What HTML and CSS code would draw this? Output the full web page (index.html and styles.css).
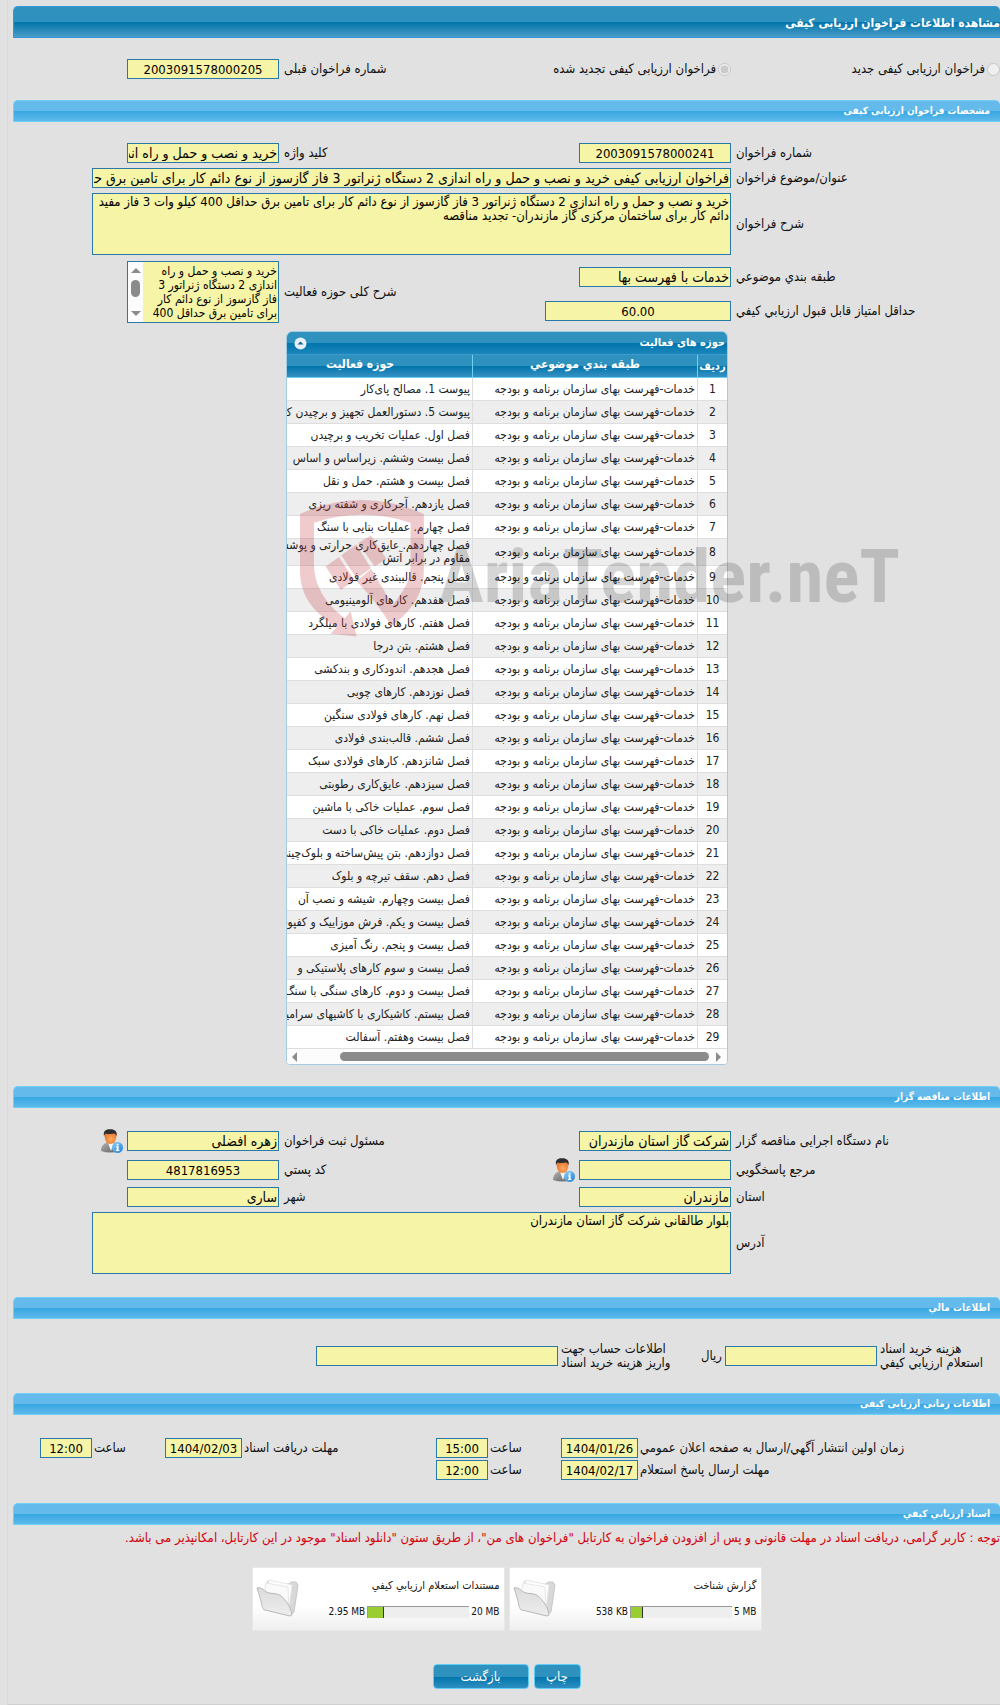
FILE: index.html
```html
<!DOCTYPE html>
<html lang="fa" dir="rtl">
<head>
	<meta charset="utf-8">
	<title>مشاهده اطلاعات فراخوان ارزیابی کیفی</title>
	<link rel="stylesheet" href="styles.css">
</head>
<body>
	<!-- shared icons -->
	<svg class="defs" aria-hidden="true">
		<defs>
			<linearGradient id="gSuit" x1="0" y1="0" x2="1" y2="1">
				<stop offset="0" stop-color="#b5b5b5"/>
				<stop offset="1" stop-color="#5c5c5c"/>
			</linearGradient>
			<radialGradient id="gFace" cx="0.55" cy="0.6" r="0.6">
				<stop offset="0" stop-color="#ffab61"/>
				<stop offset="1" stop-color="#e5742a"/>
			</radialGradient>
			<linearGradient id="gInfo" x1="0" y1="0" x2="1" y2="1">
				<stop offset="0" stop-color="#8fd0fa"/>
				<stop offset="1" stop-color="#1c7fd4"/>
			</linearGradient>
			<linearGradient id="gFolder" x1="0" y1="0" x2="0" y2="1">
				<stop offset="0" stop-color="#dcdcdc"/>
				<stop offset="1" stop-color="#ededed"/>
			</linearGradient>
		</defs>
		<symbol id="user" viewBox="0 0 22 24">
			<path d="M0 22C0 17 3 14 7 13L12 13C16 14 18 17 18 22Q9 25 0 22Z" fill="url(#gSuit)"/>
			<path d="M7 14L10 22L13 14Z" fill="#f4f4f4"/>
			<path d="M3.500 5C3.500 12 6 15 9.500 15S15.500 12 15.500 5L14 3H5Z" fill="url(#gFace)"/>
			<path d="M3 7C2 2 5 0 9 0.300C13 0 16.500 2 15.700 7C15 5.500 14 5 13 4.600C10 5.400 6 5 4.500 4.500Q3.500 5.500 3 7Z" fill="#2e2e2e"/>
			<circle cx="16.500" cy="18.500" r="5.500" fill="url(#gInfo)"/>
			<path d="M15.700 14.800H17.600V16.400H15.700ZM15 17.300H17.600V21H18.400V22H15V21H15.700V18.200H15Z" fill="#fff"/>
		</symbol>
		<symbol id="folder" viewBox="0 0 44 40">
			<path d="M9 7L12 2L27 6L33 5L35 3H40L42 6L38 33L35 36Z" fill="#d8d8d8" stroke="#c8c8c8"/>
			<path d="M9 13L13 1L36 6L33 30Z" fill="#fdfdfd" stroke="#e6e6e6"/>
			<path d="M8 15L10 4L32 8L33 30Z" fill="#fafafa" stroke="#e8e8e8"/>
			<path d="M1 9C4 8 7 10 9 12C14 16 20 13 25 17C30 21 35 28 36 36L34 37L9 31C7 31 7 29 6 27C5 21 3 15 1 9Z" fill="url(#gFolder)" stroke="#b8b8b8"/>
		</symbol>
	</svg>

	<div class="page">
		<h1 class="title">مشاهده اطلاعات فراخوان ارزیابی کیفی</h1>

		<form>
			<div class="fields first">
				<div class="choice">
					<input type="radio" id="new" name="kind" disabled>
					<label for="new">فراخوان ارزیابی کیفی جدید</label>
				</div>
				<div class="choice">
					<input type="radio" id="renew" name="kind" checked disabled>
					<label for="renew">فراخوان ارزیابی کیفی تجدید شده</label>
				</div>
				<label class="lbl" for="prev">شماره فراخوان قبلی</label>
				<input class="box num" id="prev" type="text" value="2003091578000205" readonly>
			</div>

			<h2 class="bar">مشخصات فراخوان ارزیابی کیفی</h2>
			<div class="fields spec">
				<label class="lbl" for="no">شماره فراخوان</label>
				<input class="box num" id="no" type="text" value="2003091578000241" readonly>
				<label class="lbl" for="key">کلید واژه</label>
				<input class="box" id="key" type="text" value="خرید و نصب و حمل و راه اندازی 2 دستگاه ژنراتور" readonly>

				<label class="lbl" for="subject">عنوان/موضوع فراخوان</label>
				<input class="box wide" id="subject" type="text" value="فراخوان ارزیابی کیفی خرید و نصب و حمل و راه اندازی 2 دستگاه ژنراتور 3 فاز گازسوز از نوع دائم کار برای تامین برق حداقل 400 کیلو وات 3 فاز مفید دائم کار" readonly>

				<label class="lbl" for="desc">شرح فراخوان</label>
				<textarea class="box wide" id="desc" readonly>خرید و نصب و حمل و راه اندازی 2 دستگاه ژنراتور 3 فاز گازسوز از نوع دائم کار برای تامین برق حداقل 400 کیلو وات 3 فاز مفید دائم کار برای ساختمان مرکزی گاز مازندران- تجدید مناقصه</textarea>

				<label class="lbl" for="cat">طبقه بندي موضوعي</label>
				<input class="box" id="cat" type="text" value="خدمات با فهرست بها" readonly>
				<label class="lbl tall" for="scope">شرح کلی حوزه فعالیت</label>
				<div class="box scroller tall">
					<textarea id="scope" readonly>خرید و نصب و حمل و راه
اندازی 2 دستگاه ژنراتور 3
فاز گازسوز از نوع دائم کار
برای تامین برق حداقل 400
کیلو وات 3 فاز مفید دائم</textarea>
					<div class="vscroll"><i class="up"></i><i class="thumb"></i><i class="down"></i></div>
				</div>

				<label class="lbl" for="score">حداقل امتیاز قابل قبول ارزیابي کیفي</label>
				<input class="box num score" id="score" type="text" value="60.00" readonly>
			</div>

			<div class="grid">
				<div class="grid-title">
					<span>حوزه های فعالیت</span>
					<button type="button" class="fold" aria-label="بستن"><svg viewBox="0 0 13 13"><circle cx="6.500" cy="6.500" r="6" fill="#e4f1fa"/><path d="M3.500 7.500L6.500 4.500L9.500 7.500Z" fill="#1a5f8c"/></svg></button>
				</div>
				<table>
					<thead>
						<tr>
							<th class="c1">ردیف</th>
							<th class="c2">طبقه بندي موضوعي</th>
							<th class="c3">حوزه فعالیت</th>
						</tr>
					</thead>
					<tbody>
						<tr><td>1</td><td>خدمات-فهرست بهای سازمان برنامه و بودجه</td><td>پیوست 1. مصالح پای‌کار</td></tr>
						<tr><td>2</td><td>خدمات-فهرست بهای سازمان برنامه و بودجه</td><td>پیوست 5. دستورالعمل تجهیز و برچیدن کارگاه</td></tr>
						<tr><td>3</td><td>خدمات-فهرست بهای سازمان برنامه و بودجه</td><td>فصل اول. عملیات تخریب و برچیدن</td></tr>
						<tr><td>4</td><td>خدمات-فهرست بهای سازمان برنامه و بودجه</td><td>فصل بیست وششم. زیراساس و اساس</td></tr>
						<tr><td>5</td><td>خدمات-فهرست بهای سازمان برنامه و بودجه</td><td>فصل بیست و هشتم. حمل و نقل</td></tr>
						<tr><td>6</td><td>خدمات-فهرست بهای سازمان برنامه و بودجه</td><td>فصل یازدهم. آجرکاری و شفته ریزی</td></tr>
						<tr><td>7</td><td>خدمات-فهرست بهای سازمان برنامه و بودجه</td><td>فصل چهارم. عملیات بنایی با سنگ</td></tr>
						<tr class="two"><td>8</td><td>خدمات-فهرست بهای سازمان برنامه و بودجه</td><td>فصل چهاردهم. عایق‌کاری حرارتی و پوشش‌های<br>مقاوم در برابر آتش</td></tr>
						<tr><td>9</td><td>خدمات-فهرست بهای سازمان برنامه و بودجه</td><td>فصل پنجم. قالببندی غیر فولادی</td></tr>
						<tr><td>10</td><td>خدمات-فهرست بهای سازمان برنامه و بودجه</td><td>فصل هفدهم. کارهای آلومینیومی</td></tr>
						<tr><td>11</td><td>خدمات-فهرست بهای سازمان برنامه و بودجه</td><td>فصل هفتم. کارهای فولادی با میلگرد</td></tr>
						<tr><td>12</td><td>خدمات-فهرست بهای سازمان برنامه و بودجه</td><td>فصل هشتم. بتن درجا</td></tr>
						<tr><td>13</td><td>خدمات-فهرست بهای سازمان برنامه و بودجه</td><td>فصل هجدهم. اندودکاری و بندکشی</td></tr>
						<tr><td>14</td><td>خدمات-فهرست بهای سازمان برنامه و بودجه</td><td>فصل نوزدهم. کارهای چوبی</td></tr>
						<tr><td>15</td><td>خدمات-فهرست بهای سازمان برنامه و بودجه</td><td>فصل نهم. کارهای فولادی سنگین</td></tr>
						<tr><td>16</td><td>خدمات-فهرست بهای سازمان برنامه و بودجه</td><td>فصل ششم. قالب‌بندی فولادی</td></tr>
						<tr><td>17</td><td>خدمات-فهرست بهای سازمان برنامه و بودجه</td><td>فصل شانزدهم. کارهای فولادی سبک</td></tr>
						<tr><td>18</td><td>خدمات-فهرست بهای سازمان برنامه و بودجه</td><td>فصل سیزدهم. عایق‌کاری رطوبتی</td></tr>
						<tr><td>19</td><td>خدمات-فهرست بهای سازمان برنامه و بودجه</td><td>فصل سوم. عملیات خاکی با ماشین</td></tr>
						<tr><td>20</td><td>خدمات-فهرست بهای سازمان برنامه و بودجه</td><td>فصل دوم. عملیات خاکی با دست</td></tr>
						<tr><td>21</td><td>خدمات-فهرست بهای سازمان برنامه و بودجه</td><td>فصل دوازدهم. بتن پیش‌ساخته و بلوک‌چینی</td></tr>
						<tr><td>22</td><td>خدمات-فهرست بهای سازمان برنامه و بودجه</td><td>فصل دهم. سقف تیرچه و بلوک</td></tr>
						<tr><td>23</td><td>خدمات-فهرست بهای سازمان برنامه و بودجه</td><td>فصل بیست وچهارم. شیشه و نصب آن</td></tr>
						<tr><td>24</td><td>خدمات-فهرست بهای سازمان برنامه و بودجه</td><td>فصل بیست و یکم. فرش موزاییک و کفپوش</td></tr>
						<tr><td>25</td><td>خدمات-فهرست بهای سازمان برنامه و بودجه</td><td>فصل بیست و پنجم. رنگ آمیزی</td></tr>
						<tr><td>26</td><td>خدمات-فهرست بهای سازمان برنامه و بودجه</td><td>فصل بیست و سوم کارهای پلاستیکی و</td></tr>
						<tr><td>27</td><td>خدمات-فهرست بهای سازمان برنامه و بودجه</td><td>فصل بیست و دوم. کارهای سنگی با سنگ</td></tr>
						<tr><td>28</td><td>خدمات-فهرست بهای سازمان برنامه و بودجه</td><td>فصل بیستم. کاشیکاری با کاشیهای سرامیکی</td></tr>
						<tr><td>29</td><td>خدمات-فهرست بهای سازمان برنامه و بودجه</td><td>فصل بیست وهفتم. آسفالت</td></tr>
					</tbody>
				</table>
				<div class="hscroll"><i class="next"></i><i class="track"><i class="thumb"></i></i><i class="prev"></i></div>
			</div>

			<h2 class="bar">اطلاعات مناقصه گزار</h2>
			<div class="fields owner">
				<label class="lbl" for="org">نام دستگاه اجرایی مناقصه گزار</label>
				<input class="box" id="org" type="text" value="شرکت گاز استان مازندران" readonly>
				<label class="lbl" for="agent">مسئول ثبت فراخوان</label>
				<div class="with-icon">
					<input class="box" id="agent" type="text" value="زهره افضلی" readonly>
					<svg class="user"><use href="#user"/></svg>
				</div>

				<label class="lbl" for="ref">مرجع پاسخگويي</label>
				<div class="with-icon">
					<input class="box" id="ref" type="text" readonly>
					<svg class="user"><use href="#user"/></svg>
				</div>
				<label class="lbl" for="zip">کد پستي</label>
				<input class="box num" id="zip" type="text" value="4817816953" readonly>

				<label class="lbl" for="state">استان</label>
				<input class="box" id="state" type="text" value="مازندران" readonly>
				<label class="lbl" for="city">شهر</label>
				<input class="box" id="city" type="text" value="ساری" readonly>

				<label class="lbl" for="addr">آدرس</label>
				<textarea class="box wide" id="addr" readonly>بلوار طالقانی شرکت گاز استان مازندران</textarea>
			</div>

			<h2 class="bar">اطلاعات مالي</h2>
			<div class="money">
				<label class="lbl" for="cost">هزینه خرید اسناد<br>استعلام ارزیابي کیفي</label>
				<input class="box" id="cost" type="text" readonly>
				<div class="unit">
					<span>ریال</span>
					<label class="lbl" for="account">اطلاعات حساب جهت<br>واریز هزینه خرید اسناد</label>
				</div>
				<input class="box" id="account" type="text" readonly>
			</div>

			<h2 class="bar">اطلاعات زمانی ارزیابی کیفی</h2>
			<div class="times">
				<label class="lbl" for="d1">زمان اولین انتشار آگهي/ارسال به صفحه اعلان عمومي</label>
				<input class="box num" id="d1" type="text" value="1404/01/26" readonly>
				<label class="lbl" for="t1">ساعت</label>
				<input class="box num" id="t1" type="text" value="15:00" readonly>
				<label class="lbl" for="d2">مهلت دریافت اسناد</label>
				<input class="box num" id="d2" type="text" value="1404/02/03" readonly>
				<label class="lbl" for="t2">ساعت</label>
				<input class="box num" id="t2" type="text" value="12:00" readonly>

				<label class="lbl row2" for="d3">مهلت ارسال پاسخ استعلام</label>
				<input class="box num" id="d3" type="text" value="1404/02/17" readonly>
				<label class="lbl" for="t3">ساعت</label>
				<input class="box num" id="t3" type="text" value="12:00" readonly>
			</div>

			<h2 class="bar">اسناد ارزیابي کیفي</h2>
			<p class="note">توجه : کاربر گرامی، دریافت اسناد در مهلت قانونی و پس از افزودن فراخوان به کارتابل "فراخوان های من"، از طریق ستون "دانلود اسناد" موجود در این کارتابل، امکانپذیر می باشد.</p>

			<div class="files">
				<div class="file">
					<div class="info">
						<a href="#">گزارش شناخت</a>
						<div class="usage">
							<bdi>5 MB</bdi>
							<div class="meter"><span style="width: 12%"></span></div>
							<bdi>538 KB</bdi>
						</div>
					</div>
					<svg class="folder"><use href="#folder"/></svg>
				</div>
				<div class="file">
					<div class="info">
						<a href="#">مستندات استعلام ارزیابي کیفي</a>
						<div class="usage">
							<bdi>20 MB</bdi>
							<div class="meter"><span style="width: 16%"></span></div>
							<bdi>2.95 MB</bdi>
						</div>
					</div>
					<svg class="folder"><use href="#folder"/></svg>
				</div>
			</div>

			<div class="actions">
				<button type="button" class="btn">چاپ</button>
				<button type="button" class="btn back">بازگشت</button>
			</div>
		</form>

		<svg class="mark" viewBox="0 0 620 160" direction="ltr">
			<g transform="scale(0.333)" fill="#c4454d" fill-opacity="0.28">
				<path d="M30 72Q120 30 216 30Q312 30 402 72V240C402 310 368 360 304 410C290 380 245 320 200 274L244 237L308 345C345 300 362 270 362 230V98Q290 74 216 74Q142 74 72 98V220C72 290 110 345 165 385L182 365L200 440L122 432L140 412C60 360 30 310 30 240Z"/>
				<path d="M107 230L147 201L193 270L153 300Z"/>
				<path d="M154 196L199 163L243 235L200 266Z"/>
				<path d="M205 159L243 137L290 207L254 230Z"/>
			</g>
			<text x="149" y="112" class="mark-text">AriaTender.neT</text>
		</svg>
	</div>
</body>
</html>
```
FILE: styles.css
```css
* {
	box-sizing: border-box;
}
body {
	margin: 0;
	padding-left: 7px;
	background: #e1e1e1;
	font: 13px/14px "DejaVu Sans Condensed", "DejaVu Sans", sans-serif;
	color: #111;
}
.defs {
	position: absolute;
	width: 0;
	height: 0;
}
.page {
	position: relative;
	padding: 6px 0 15px 5px;
	border-left: 1px solid #dadada;
	border-bottom: 1px solid #d0d0d0;
	overflow: hidden;
}

/* headings */
.title,
.bar {
	margin: 0;
	color: #fff;
	font-weight: bold;
}
.title {
	height: 32px;
	font-size: 12px;
	line-height: 32px;
	border: 1px solid #3496dc;
	border-right: 0;
	border-radius: 5px 5px 0 0;
	background: linear-gradient(#2f91be 50%, #0074ac 50%, #4a9cc6);
}
.bar {
	height: 22px;
	padding-right: 10px;
	font-size: 10px;
	line-height: 20px;
	border: 1px solid #70d0f6;
	border-right: 0;
	border-radius: 5px 5px 0 0;
	background: linear-gradient(#64baea 50%, #38a7e2 50%, #5db9eb);
}

/* fields */
.fields {
	display: grid;
	grid-template-columns: 264fr 279fr 163fr 266fr;
	gap: 5px;
	align-items: center;
}
.first {
	padding: 21px 0;
}
.spec {
	grid-template-rows: 20px 20px 62px 34px 24px;
	padding: 21px 0 8px;
}
.owner {
	grid-template-rows: 24px 24px 20px 62px;
	padding: 21px 0 23px;
}
.lbl {
	text-align: left;
	white-space: nowrap;
}
.choice {
	display: flex;
	align-items: center;
	gap: 2px;
	white-space: nowrap;
}
.choice input {
	width: 13px;
	height: 13px;
	margin: 0;
}
.box {
	width: 152px;
	height: 20px;
	padding: 0 1px;
	border: 1px solid #2878a8;
	background: #f6f4a6;
	color: #000;
	font: 14px "DejaVu Sans Condensed", "DejaVu Sans", sans-serif;
	outline: none;
}
.num {
	font-size: 13px;
	text-align: center;
}
.score {
	width: 186px;
}
.wide {
	grid-column: 2 / 5;
	width: 89%;
}
textarea {
	display: block;
	resize: none;
	overflow: hidden;
}
textarea.box {
	height: 62px;
	padding: 1px;
	font-size: 13px;
	line-height: 14px;
}
.tall {
	grid-row: 4 / 6;
}
.lbl.tall {
	grid-column: 3;
}
.scroller {
	grid-column: 4;
	display: flex;
	height: 62px;
	padding: 0;
}
.scroller textarea {
	flex: 1;
	min-width: 0;
	padding: 2px 1px 0;
	border: 0;
	background: none;
	white-space: pre;
	font: 12px/14px "DejaVu Sans Condensed", "DejaVu Sans", sans-serif;
	outline: none;
}
.vscroll {
	display: flex;
	flex-direction: column;
	align-items: center;
	width: 15px;
	padding: 6px 0;
	background: #fcfcfc;
}
.vscroll .up,
.vscroll .down {
	border: 5px solid transparent;
}
.vscroll .up {
	border-top: 0;
	border-bottom-color: #8b8b8b;
}
.vscroll .down {
	border-bottom: 0;
	border-top-color: #8b8b8b;
}
.vscroll .thumb {
	width: 9px;
	height: 17px;
	margin: 7px 0 auto;
	border-radius: 5px;
	background: #8b8b8b;
}
.with-icon {
	display: flex;
	align-items: center;
	gap: 4px;
}
.user {
	width: 22px;
	height: 24px;
}

/* activity grid */
.grid {
	width: 442px;
	margin: 0 272px 21px 0;
	border: 1px solid #a3cbe5;
	border-radius: 6px 6px 4px 4px;
	background: #fff;
	overflow: hidden;
}
.grid-title {
	display: flex;
	justify-content: space-between;
	align-items: center;
	height: 23px;
	padding: 0 2px 0 5px;
	border-bottom: 1px solid #3d9bd0;
	background: linear-gradient(#2f91be 50%, #0074ac 50%, #1b86ba);
	color: #fff;
	font-size: 11px;
	font-weight: bold;
}
.fold {
	width: 13px;
	height: 13px;
	padding: 0;
	margin-left: 2px;
	border: 0;
	background: none;
}
.fold svg {
	display: block;
}
table {
	width: 480px;
	table-layout: fixed;
	border-collapse: separate;
	border-spacing: 0;
	font: 12px/13px "DejaVu Sans Condensed", "DejaVu Sans", sans-serif;
	color: #222;
}
th {
	height: 23px;
	padding: 0 0 3px;
	border-bottom: 1px solid #6fd0f5;
	border-left: 1px solid #6fd0f5;
	background: linear-gradient(#2f91be 50%, #0074ac 50%, #3791c2);
	color: #fff;
	font-size: 12px;
}
.c1 {
	width: 30px;
	padding: 0;
	font-size: 11px;
}
.c2 {
	width: 225px;
}
td {
	height: 23px;
	padding: 0 2px;
	border-bottom: 1px solid #dedede;
	border-left: 1px solid #dedede;
	white-space: nowrap;
}
td:first-child {
	text-align: center;
}
tbody tr:nth-child(even) {
	background: #eee;
}
.two td {
	height: 27px;
}
.hscroll {
	display: flex;
	align-items: center;
	gap: 7px;
	height: 15px;
	padding: 0 6px 0 5px;
	background: #fcfcfc;
}
.hscroll .next,
.hscroll .prev {
	border: 5px solid transparent;
}
.hscroll .next {
	border-right: 0;
	border-left-color: #8b8b8b;
}
.hscroll .prev {
	border-left: 0;
	border-right-color: #8b8b8b;
}
.hscroll .track {
	flex: 1;
}
.hscroll .thumb {
	display: block;
	width: 91%;
	height: 9px;
	border-radius: 5px;
	background: #8b8b8b;
}

/* money and dates */
.money {
	display: grid;
	grid-template-columns: 120fr 152fr 161fr 242fr 300fr;
	gap: 3px;
	align-items: center;
	padding: 23px 0;
}
.money .box {
	width: 100%;
}
.unit {
	display: flex;
	justify-content: space-between;
	align-items: center;
}
.times {
	display: grid;
	grid-template-columns: 360fr 77fr 69fr 52fr 190fr 77fr 69fr 52fr 25fr;
	gap: 2px;
	align-items: center;
	padding: 23px 0;
}
.times .box {
	width: 100%;
}
.row2 {
	grid-column: 1;
}

/* files */
.note {
	margin: 6px 0 22px;
	color: #d4000c;
	white-space: nowrap;
}
.files {
	display: flex;
	justify-content: center;
	gap: 4px;
}
.file {
	display: flex;
	justify-content: space-between;
	width: 253px;
	height: 64px;
	padding: 11px 4px 0 3px;
	border: 1px solid #e8e8e8;
	background: linear-gradient(#fff 60%, #efefef);
	font-size: 11px;
}
.file a {
	color: #111;
	text-decoration: none;
}
.usage {
	display: flex;
	align-items: center;
	gap: 2px;
	margin-top: 12px;
	font-size: 10px;
}
.meter {
	direction: ltr;
	width: 102px;
	height: 12px;
	border-top: 1px solid #999;
	border-left: 1px solid #999;
	background: #eee;
}
.meter span {
	display: block;
	height: 100%;
	border-right: 1px solid #333;
	background: #9acd32;
}
.folder {
	width: 44px;
	height: 40px;
}

/* buttons */
.actions {
	display: flex;
	justify-content: center;
	gap: 5px;
	margin-top: 33px;
}
.btn {
	width: 47px;
	height: 25px;
	padding: 0;
	border: 1px solid #5fcdf5;
	border-radius: 4px;
	background: linear-gradient(#2f91be 50%, #0074ac 50%, #2f8fc0);
	color: #fff;
	font: 13px "DejaVu Sans Condensed", "DejaVu Sans", sans-serif;
}
.back {
	width: 96px;
}

/* watermark lies over the grid */
.mark {
	position: absolute;
	top: 490px;
	left: 282px;
	width: 620px;
	height: 160px;
	pointer-events: none;
}
.mark-text {
	font: bold 75px "Roboto Condensed", Roboto, sans-serif;
	fill: #000;
	fill-opacity: 0.16;
}
```
